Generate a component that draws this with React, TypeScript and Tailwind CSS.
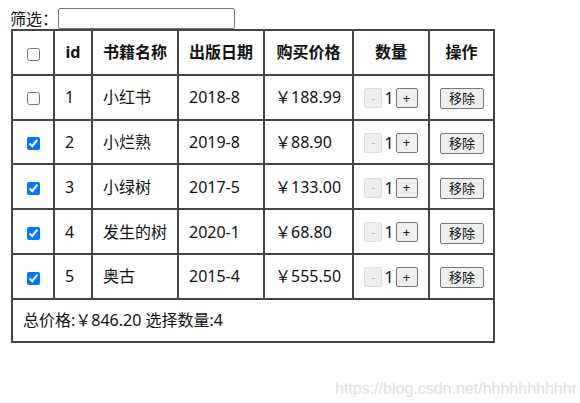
import { useState } from 'react';

interface Book {
    id: number;
    name: string;
    date: string;
    price: number;
    count: number;
    checked: boolean;
}

const initialBooks: Book[] = [
    { id: 1, name: '小红书', date: '2018-8', price: 188.99, count: 1, checked: false },
    { id: 2, name: '小烂熟', date: '2019-8', price: 88.9, count: 1, checked: true },
    { id: 3, name: '小绿树', date: '2017-5', price: 133.0, count: 1, checked: true },
    { id: 4, name: '发生的树', date: '2020-1', price: 68.8, count: 1, checked: true },
    { id: 5, name: '奥古', date: '2015-4', price: 555.5, count: 1, checked: true },
];

const cell = 'border-2 border-[#444] px-[10px] h-[44.8px]';

export default function App() {
    const [books, setBooks] = useState<Book[]>(initialBooks);
    const [filter, setFilter] = useState('');

    const visible = books.filter((b) => b.name.includes(filter));
    const selected = books.filter((b) => b.checked);
    const total = selected.reduce((s, b) => s + b.price * b.count, 0);
    const allChecked = books.length > 0 && books.every((b) => b.checked);

    const update = (id: number, patch: Partial<Book>) => {
        setBooks((prev) => prev.map((b) => (b.id === id ? { ...b, ...patch } : b)));
    };

    return (
        <div className="w-[580px] h-[403px] bg-white relative text-[16px] text-[#111] font-['Noto_Sans','Noto_Sans_CJK_SC',sans-serif]">
            <div className="flex items-end h-[29px] pl-[10px]">
                <span className="text-[16px] leading-[20px]">筛选：</span>
                <input
                    value={filter}
                    onChange={(e) => setFilter(e.target.value)}
                    className="w-[177px] h-[21px] border border-[#767676] rounded-[2px] px-1 text-[13px] outline-none"
                />
            </div>

            <table className="ml-[11px] border-collapse table-fixed w-[482px]">
                <colgroup>
                    <col className="w-[42px]" />
                    <col className="w-[38px]" />
                    <col className="w-[86px]" />
                    <col className="w-[86px]" />
                    <col className="w-[89px]" />
                    <col className="w-[76px]" />
                    <col className="w-[65px]" />
                </colgroup>
                <thead>
                    <tr className="font-bold">
                        <th className={cell + ' text-center'}>
                            <input
                                type="checkbox"
                                checked={allChecked}
                                onChange={(e) => setBooks((prev) => prev.map((b) => ({ ...b, checked: e.target.checked })))}
                                className="align-middle w-[13px] h-[13px]"
                            />
                        </th>
                        <th className={cell + ' text-center'}>id</th>
                        <th className={cell + ' text-center'}>书籍名称</th>
                        <th className={cell + ' text-center'}>出版日期</th>
                        <th className={cell + ' text-center'}>购买价格</th>
                        <th className={cell + ' text-center'}>数量</th>
                        <th className={cell + ' text-center'}>操作</th>
                    </tr>
                </thead>
                <tbody>
                    {visible.map((b) => (
                        <tr key={b.id}>
                            <td className={cell + ' text-center'}>
                                <input
                                    type="checkbox"
                                    checked={b.checked}
                                    onChange={(e) => update(b.id, { checked: e.target.checked })}
                                    className="align-middle w-[13px] h-[13px]"
                                />
                            </td>
                            <td className={cell}>{b.id}</td>
                            <td className={cell}>{b.name}</td>
                            <td className={cell}>{b.date}</td>
                            <td className={cell + ' whitespace-nowrap'}>￥{b.price.toFixed(2)}</td>
                            <td className={cell + ' text-center whitespace-nowrap'}>
                                <button
                                    disabled={b.count <= 1}
                                    onClick={() => update(b.id, { count: b.count - 1 })}
                                    className="inline-block w-[18px] h-[20px] align-middle text-[13px] leading-none rounded-[2px] border border-[#ddd] bg-[#efefef] text-[#aaa] disabled:text-[#bbb] enabled:border-[#767676] enabled:text-black"
                                >
                                    -
                                </button>
                                <span className="align-middle mx-[2px]">{b.count}</span>
                                <button
                                    onClick={() => update(b.id, { count: b.count + 1 })}
                                    className="inline-block w-[22px] h-[20px] align-middle text-[13px] leading-none rounded-[2px] border border-[#767676] bg-[#efefef]"
                                >
                                    +
                                </button>
                            </td>
                            <td className={cell + ' text-center'}>
                                <button
                                    onClick={() => setBooks((prev) => prev.filter((x) => x.id !== b.id))}
                                    className="w-[44px] h-[21px] align-middle text-[13px] leading-none rounded-[2px] border border-[#767676] bg-[#efefef]"
                                >
                                    移除
                                </button>
                            </td>
                        </tr>
                    ))}
                    <tr>
                        <td colSpan={7} className="border-2 border-[#444] px-[10px] h-[43px]">
                            总价格:￥{total.toFixed(2)} 选择数量:{selected.length}
                        </td>
                    </tr>
                </tbody>
            </table>

            {/* csdn watermark */}
            <div className="absolute left-[335px] top-[377px] text-[16px] text-[#e2e2e2] font-['Liberation_Sans',sans-serif]">
                https://blog.csdn.net/hhhhhhhhhhr
            </div>
        </div>
    );
}
